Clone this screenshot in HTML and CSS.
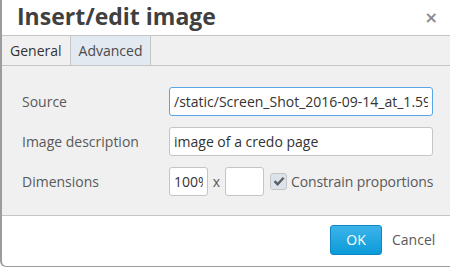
FILE: index.html
```html
<!DOCTYPE html>
<html lang="en">
<head>
    <meta charset="UTF-8">
    <title>Insert/edit image</title>
    <link rel="stylesheet" href="styles.css">
</head>
<body>
    <div class="dialog">
        <div class="dialog-head">
            <h1>Insert/edit image</h1>
            <span class="close">&times;</span>
        </div>
        <div class="tabs">
            <div class="tab active">General</div>
            <div class="tab">Advanced</div>
        </div>
        <div class="dialog-body">
            <div class="row">
                <label>Source</label>
                <input class="field focus" type="text" value="/static/Screen_Shot_2016-09-14_at_1.59.png">
            </div>
            <div class="row">
                <label>Image description</label>
                <input class="field" type="text" value="image of a credo page">
            </div>
            <div class="row">
                <label>Dimensions</label>
                <div class="dims">
                    <input class="field small" type="text" value="100%">
                    <span class="times">x</span>
                    <input class="field small" type="text" value="">
                    <span class="check">
                        <svg width="12" height="10" viewBox="0 0 12 10"><path d="M1.5 5.2 L4.6 8.2 L10.6 1.8" fill="none" stroke="#5a5f66" stroke-width="2.4"/></svg>
                    </span>
                    <span class="check-label">Constrain proportions</span>
                </div>
            </div>
        </div>
        <div class="dialog-foot">
            <button class="btn-ok">OK</button>
            <button class="btn-cancel">Cancel</button>
        </div>
    </div>
</body>
</html>
```

FILE: styles.css
```css
body {
    margin: 0;
    font-family: "Open Sans", sans-serif;
    font-size: 14px;
    color: #333;
    background: #fff;
    overflow: hidden;
}
.dialog {
    width: 470px;
    height: 266px;
    border-left: 2px solid #9c9c9c;
    border-bottom: 1px solid #9c9c9c;
    border-bottom-left-radius: 6px;
    background: #fff;
    display: flex;
    flex-direction: column;
    overflow: hidden;
}
.dialog-head {
    height: 35px;
    border-bottom: 1px solid #c5c5c5;
    display: flex;
    align-items: center;
    padding-left: 15px;
    padding-right: 34px;
}
.dialog-head h1 {
    flex: 1;
    margin: 0;
    font-size: 23px;
    font-weight: 700;
    color: #404040;
    line-height: 30px;
    margin-top: -3px;
}
.close {
    font-size: 16px;
    color: #8b8b8b;
    font-family: "DejaVu Sans", sans-serif;
    font-weight: bold;
    line-height: 16px;
}
.tabs {
    display: flex;
    height: 29px;
    background: #f0f0f0;
    border-bottom: 1px solid #c5c5c5;
}
.tab {
    padding: 0 8px;
    line-height: 29px;
    color: #333;
    border-right: 1px solid #c5c5c5;
}
.tab + .tab {
    background: #e3e9f0;
    color: #4a4a4a;
}
.dialog-body {
    background: #f0f0f0;
    height: 150px;
    padding-top: 20px;
    box-sizing: border-box;
    border-bottom: 1px solid #c5c5c5;
}
.row {
    display: flex;
    align-items: center;
    height: 30px;
    margin-bottom: 10px;
    padding-left: 20px;
}
.row label {
    width: 147px;
    color: #595959;
}
.field {
    width: 264px;
    height: 29px;
    box-sizing: border-box;
    border: 1px solid #c5c5c5;
    border-radius: 3px;
    background: #fff;
    padding: 0 4px;
    font-family: "Open Sans", sans-serif;
    font-size: 14px;
    color: #333;
    outline: none;
}
.field.focus {
    border-color: #59a5e5;
}
.dims {
    display: flex;
    align-items: center;
}
.field.small {
    width: 39px;
}
.times {
    width: 17px;
    text-align: center;
    color: #595959;
}
.check {
    width: 17px;
    height: 17px;
    margin-left: 6px;
    margin-right: 4px;
    box-sizing: border-box;
    border: 1px solid #c5c5c5;
    border-radius: 3px;
    background: #dde3ea;
    display: flex;
    align-items: center;
    justify-content: center;
}
.check-label {
    color: #595959;
    letter-spacing: -0.1px;
}
.dialog-foot {
    flex: 1;
    display: flex;
    align-items: center;
    padding-left: 328px;
    padding-bottom: 3px;
}
.btn-ok {
    width: 52px;
    height: 30px;
    border: 1px solid #0b87c5;
    border-radius: 3px;
    background: linear-gradient(#3db3e9, #0b9bd9);
    color: #fff;
    font-family: "Open Sans", sans-serif;
    font-size: 14px;
}
.btn-cancel {
    border: none;
    background: none;
    margin-left: 4px;
    color: #595959;
    font-family: "Open Sans", sans-serif;
    font-size: 14px;
    padding: 0 6px;
}
```
